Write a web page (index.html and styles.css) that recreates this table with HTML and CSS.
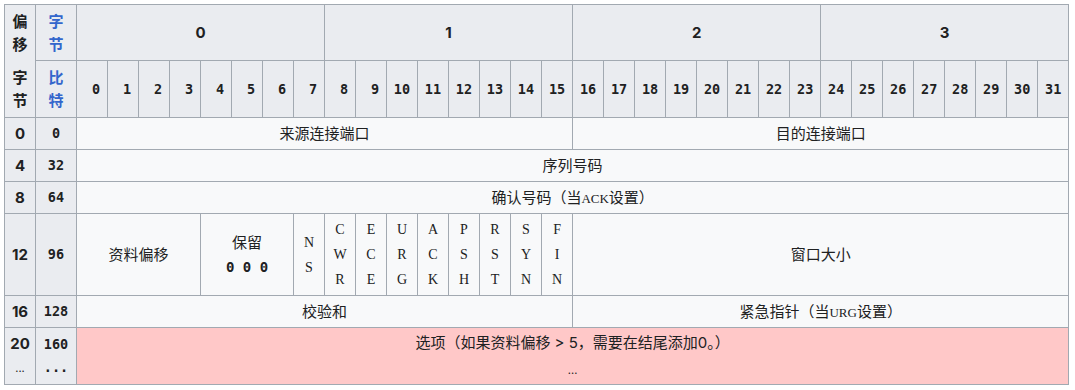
FILE: index.html
```html
<!DOCTYPE html>
<html lang="zh">
<head>
<meta charset="utf-8">
<title>TCP 头部</title>
<link rel="stylesheet" href="styles.css">
</head>
<body>
<table class="tcp">
  <colgroup>
    <col class="c-off"><col class="c-boff">
    <col class="c-bit"><col class="c-bit"><col class="c-bit"><col class="c-bit"><col class="c-bit"><col class="c-bit"><col class="c-bit"><col class="c-bit">
    <col class="c-bit"><col class="c-bit"><col class="c-bit"><col class="c-bit"><col class="c-bit"><col class="c-bit"><col class="c-bit"><col class="c-bit">
    <col class="c-bit"><col class="c-bit"><col class="c-bit"><col class="c-bit"><col class="c-bit"><col class="c-bit"><col class="c-bit"><col class="c-bit">
    <col class="c-bit"><col class="c-bit"><col class="c-bit"><col class="c-bit"><col class="c-bit"><col class="c-bit"><col class="c-bit"><col class="c-bit">
  </colgroup>
  <tr class="r-top">
    <th class="no-bottom">偏<br>移</th>
    <th><a class="link">字<br>节</a></th>
    <th colspan="8">0</th>
    <th colspan="8">1</th>
    <th colspan="8">2</th>
    <th colspan="8">3</th>
  </tr>
  <tr class="r-bits">
    <th class="no-top">字<br>节</th>
    <th><a class="link">比<br>特</a></th>
    <th class="mono">&nbsp;0</th><th class="mono">&nbsp;1</th><th class="mono">&nbsp;2</th><th class="mono">&nbsp;3</th>
    <th class="mono">&nbsp;4</th><th class="mono">&nbsp;5</th><th class="mono">&nbsp;6</th><th class="mono">&nbsp;7</th>
    <th class="mono">&nbsp;8</th><th class="mono">&nbsp;9</th><th class="mono">10</th><th class="mono">11</th>
    <th class="mono">12</th><th class="mono">13</th><th class="mono">14</th><th class="mono">15</th>
    <th class="mono">16</th><th class="mono">17</th><th class="mono">18</th><th class="mono">19</th>
    <th class="mono">20</th><th class="mono">21</th><th class="mono">22</th><th class="mono">23</th>
    <th class="mono">24</th><th class="mono">25</th><th class="mono">26</th><th class="mono">27</th>
    <th class="mono">28</th><th class="mono">29</th><th class="mono">30</th><th class="mono">31</th>
  </tr>
  <tr class="r-std">
    <th>0</th><th class="mono">0</th>
    <td colspan="16">来源连接端口</td>
    <td colspan="16">目的连接端口</td>
  </tr>
  <tr class="r-std">
    <th>4</th><th class="mono">32</th>
    <td colspan="32">序列号码</td>
  </tr>
  <tr class="r-std">
    <th>8</th><th class="mono">64</th>
    <td colspan="32">确认号码（当<span class="tt">ACK</span>设置）</td>
  </tr>
  <tr class="r-flags">
    <th>12</th><th class="mono">96</th>
    <td colspan="4">资料偏移</td>
    <td colspan="3" class="reserved">保留<br><span class="bits">0 0 0</span></td>
    <td class="flag">N<br>S</td>
    <td class="flag">C<br>W<br>R</td>
    <td class="flag">E<br>C<br>E</td>
    <td class="flag">U<br>R<br>G</td>
    <td class="flag">A<br>C<br>K</td>
    <td class="flag">P<br>S<br>H</td>
    <td class="flag">R<br>S<br>T</td>
    <td class="flag">S<br>Y<br>N</td>
    <td class="flag">F<br>I<br>N</td>
    <td colspan="16">窗口大小</td>
  </tr>
  <tr class="r-std">
    <th>16</th><th class="mono">128</th>
    <td colspan="16">校验和</td>
    <td colspan="16">紧急指针（当<span class="tt">URG</span>设置）</td>
  </tr>
  <tr class="r-last">
    <th>20<br><span class="ell">...</span></th>
    <th class="mono">160<br>...</th>
    <td colspan="32" class="options">选项（如果资料偏移 &gt; 5，需要在结尾添加0。）<br><span class="ell">...</span></td>
  </tr>
</table>
</body>
</html>
```

FILE: styles.css
```css
html, body {
  margin: 0;
  background: #ffffff;
}

body {
  padding: 4px;
  font-family: Inter, "Noto Sans CJK SC", sans-serif;
  font-size: 15px;
  color: #202122;
}

.tcp {
  border-collapse: collapse;
  table-layout: fixed;
  width: 1064px;
  background: #f8f9fa;
  text-align: center;
  line-height: 23px;
}

.c-off { width: 31px; }
.c-boff { width: 41px; }
.c-bit { width: 31px; }

.tcp th,
.tcp td {
  border: 1px solid #a2a9b1;
  padding: 0;
  vertical-align: middle;
}

.tcp th {
  background: #eaecf0;
  font-weight: bold;
}

.tcp .no-bottom { border-bottom: none; }
.tcp .no-top { border-top: none; }

.link {
  color: #3366cc;
  text-decoration: none;
}

.mono {
  font-family: "DejaVu Sans Mono", monospace;
  font-size: 13.5px;
}

.tt {
  font-family: "Liberation Serif", serif;
  font-size: 13px;
}

.r-top { height: 56px; }
.r-bits { height: 57px; }
.r-std { height: 32px; }
.r-flags { height: 82px; }
.r-last { height: 57px; }

.flag {
  font-family: "Liberation Serif", serif;
  font-size: 14px;
  line-height: 25px;
}

.reserved {
  line-height: 24px;
}

.bits {
  font-family: "DejaVu Sans Mono", monospace;
  font-weight: bold;
  font-size: 14px;
}

.ell {
  font-weight: normal;
  font-size: 11px;
}

.options {
  background: #ffc8c8;
  line-height: 26px;
}
```
